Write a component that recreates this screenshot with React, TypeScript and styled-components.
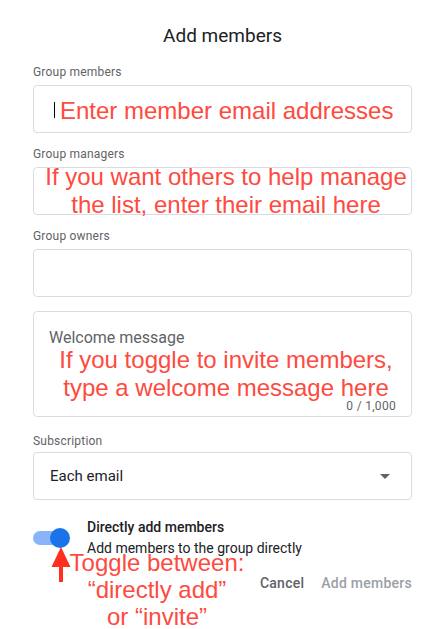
import React from "react";
import styled, { createGlobalStyle } from "styled-components";

const Global = createGlobalStyle`
  html, body { margin: 0; padding: 0; background: #fff; }
  body { font-family: Roboto, "Noto Sans", Arial, sans-serif; -webkit-font-smoothing: antialiased; }
  * { box-sizing: border-box; }
`;

const RED = "#fe4a40";

const Dialog = styled.div`
  width: 440px;
  height: 629px;
  padding: 0 28px 0 33px;
  display: flex;
  flex-direction: column;
  background: #fff;
  overflow: hidden;
`;

const Title = styled.h1`
  margin: 24px 0 0;
  font-size: 19px;
  line-height: 24px;
  font-weight: 400;
  color: #202124;
  text-align: center;
`;

const Fields = styled.div`
  margin-top: 16px;
  display: flex;
  flex-direction: column;
`;

const Field = styled.div<{ $top?: number; $gap?: number }>`
  display: flex;
  flex-direction: column;
  gap: ${(p) => p.$gap ?? 5}px;
  margin-top: ${(p) => p.$top ?? 0}px;
`;

const Label = styled.label`
  font-size: 12px;
  line-height: 16px;
  color: #5f6368;
  letter-spacing: 0.2px;
`;

const Box = styled.div<{ $padTop?: number }>`
  height: 48px;
  border: 1px solid #dadce0;
  border-radius: 4px;
  display: flex;
  align-items: center;
  justify-content: center;
  padding-top: ${(p) => p.$padTop ?? 0}px;
`;

const InputBox = styled(Box)`
  justify-content: flex-start;
  padding-left: 20px;
`;

const Caret = styled.span`
  width: 1px;
  height: 16px;
  background: #000;
  margin-top: -2px;
`;

const Annotation = styled.div<{ $shift?: number }>`
  font-family: "Liberation Sans", Arial, Helvetica, sans-serif;
  font-size: 24px;
  line-height: 28px;
  color: ${RED};
  text-align: center;
  white-space: nowrap;
  padding-left: ${(p) => p.$shift ?? 0}px;
`;

const InlineAnnotation = styled(Annotation)`
  margin-left: 5px;
`;

const TextArea = styled.div`
  position: relative;
  margin-top: 14px;
  height: 106px;
  border: 1px solid #dadce0;
  border-radius: 4px;
  padding: 16px 15px 0;
  display: flex;
  flex-direction: column;
`;

const AreaLabel = styled.div`
  font-size: 16px;
  line-height: 20px;
  color: #5f6368;
`;

const AreaAnnotation = styled(Annotation)`
  margin-top: -2px;
`;

const Counter = styled.span`
  position: absolute;
  right: 15px;
  bottom: 2px;
  font-size: 12px;
  line-height: 16px;
  color: #5f6368;
  letter-spacing: 0.3px;
`;

const Select = styled.div`
  height: 48px;
  border: 1px solid #dadce0;
  border-radius: 4px;
  display: flex;
  align-items: center;
  justify-content: space-between;
  padding: 0 21px 0 16px;
  font-size: 15px;
  color: #202124;
`;

const Footer = styled.div`
  position: relative;
  margin-top: 17px;
  display: flex;
  flex-direction: column;
`;

const ToggleRow = styled.div`
  display: flex;
  align-items: center;
  gap: 17px;
`;

const Switch = styled.div`
  position: relative;
  width: 37px;
  height: 20px;
  flex: none;
`;

const Track = styled.span`
  position: absolute;
  left: 0;
  top: 3px;
  width: 34px;
  height: 14px;
  border-radius: 7px;
  background: #8ab4f8;
`;

const Thumb = styled.span`
  position: absolute;
  right: 0;
  top: 0;
  width: 20px;
  height: 20px;
  border-radius: 50%;
  background: #1a73e8;
`;

const ToggleText = styled.div`
  display: flex;
  flex-direction: column;
  gap: 1px;
  font-size: 14px;
  line-height: 20px;
  color: #202124;
`;

const ToggleTitle = styled.span`
  font-weight: 500;
`;

const Actions = styled.div`
  margin-top: 7px;
  display: flex;
  justify-content: flex-end;
  gap: 17px;
`;

const Button = styled.button<{ $disabled?: boolean }>`
  height: 36px;
  padding: 0;
  border: none;
  background: none;
  font-family: Roboto, Arial, sans-serif;
  font-size: 14px;
  font-weight: 500;
  letter-spacing: 0.25px;
  color: ${(p) => (p.$disabled ? "#9aa0a6" : "#5f6368")};
  cursor: ${(p) => (p.$disabled ? "default" : "pointer")};
`;

const ToggleNote = styled.div`
  position: absolute;
  left: 24px;
  top: 32px;
  width: 200px;
  font-family: "Liberation Sans", Arial, Helvetica, sans-serif;
  font-size: 24px;
  line-height: 27px;
  color: ${RED};
  text-align: center;
  white-space: nowrap;
`;

const Arrow = styled.svg`
  position: absolute;
  left: 17px;
  top: 29px;
`;

export default function App() {
  return (
    <>
      <Global />
      <Dialog>
        <Title>Add members</Title>
        <Fields>
          <Field>
            <Label>Group members</Label>
            <InputBox $padTop={3}>
              <Caret />
              <InlineAnnotation>Enter member email addresses</InlineAnnotation>
            </InputBox>
          </Field>
          <Field $top={13}>
            <Label>Group managers</Label>
            <Box>
              <Annotation $shift={7}>
                If you want others to help manage
                <br />
                the list, enter their email here
              </Annotation>
            </Box>
          </Field>
          <Field $top={13}>
            <Label>Group owners</Label>
            <Box />
          </Field>
          <TextArea>
            <AreaLabel>Welcome message</AreaLabel>
            <AreaAnnotation $shift={7}>
              If you toggle to invite members,
              <br />
              type a welcome message here
            </AreaAnnotation>
            <Counter>0 / 1,000</Counter>
          </TextArea>
          <Field $top={16} $gap={3}>
            <Label>Subscription</Label>
            <Select>
              <span>Each email</span>
              <svg width="10" height="5" viewBox="0 0 10 5">
                <path d="M0 0 L10 0 L5 5 Z" fill="#5f6368" />
              </svg>
            </Select>
          </Field>
        </Fields>
        <Footer>
          <ToggleRow>
            <Switch>
              <Track />
              <Thumb />
            </Switch>
            <ToggleText>
              <ToggleTitle>Directly add members</ToggleTitle>
              <span>Add members to the group directly</span>
            </ToggleText>
          </ToggleRow>
          <Actions>
            <Button>Cancel</Button>
            <Button $disabled>Add members</Button>
          </Actions>
          <Arrow width="22" height="37" viewBox="0 0 22 37">
            <path d="M11 1 L20.5 21 L1.5 21 Z" fill="#ff2f1f" />
            <rect x="9" y="20" width="4" height="16" fill="#ff2f1f" />
          </Arrow>
          <ToggleNote>
            Toggle between:
            <br />
            “directly add”
            <br />
            or “invite”
          </ToggleNote>
        </Footer>
      </Dialog>
    </>
  );
}
